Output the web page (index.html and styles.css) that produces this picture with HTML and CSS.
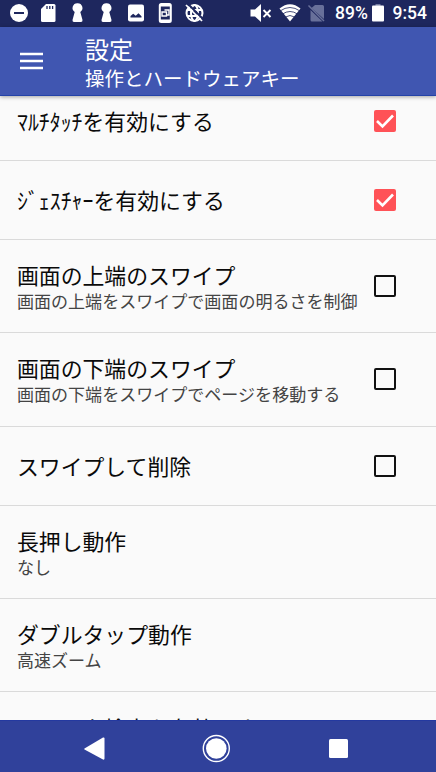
FILE: index.html
```html
<!DOCTYPE html>
<html lang="ja">
<head>
<meta charset="utf-8">
<title>設定</title>
<link rel="stylesheet" href="styles.css">
</head>
<body>
<div class="screen">
  <header class="status">
    <svg class="status-icons" width="212" height="27" viewBox="0 0 212 27" fill="#fff">
      <circle cx="19" cy="13" r="9"/><path d="M14 12h10v2H14z" fill="#1e275e"/>
      <path d="M46 4h8q1.500 0 1.500 1.500v15q0 1.500-1.500 1.500H42.500q-1.500 0-1.500-1.500V9z"/>
      <path d="M47 6v3M49.800 6v3M52.600 6v3" stroke="#1e275e" stroke-width="1.300"/>
      <path id="keyhole" d="M77.500 3.200a4.800 4.800 0 0 1 2.800 8.800l2.200 8q.2 2-1.500 2h-7q-1.700 0-1.500-2l2.200-8a4.800 4.800 0 0 1 2.800-8.800z"/>
      <use href="#keyhole" x="29"/>
      <rect x="128" y="4.500" width="16" height="17" rx="2"/><path d="M130.500 17.500v-1.500l2.700-2.200 2.500 2 2.800-2.500 3 3v1.200z" fill="#1e275e"/>
      <rect x="159.800" y="4" width="11" height="18" rx="1.500" fill="none" stroke="#fff" stroke-width="2"/>
      <path d="M160 5.500h11M160 20.500h11" stroke="#fff" stroke-width="2"/>
      <path d="M162 12h4.500v4H162zM164.500 10h4.500v5h-2" fill="none" stroke="#fff" stroke-width="1.400"/>
      <g fill="none" stroke="#fff" stroke-width="2"><circle cx="194.500" cy="13" r="8"/><ellipse cx="194.500" cy="13" rx="3.500" ry="8"/><path d="M187 10h15M187 16h15"/></g>
      <path d="M187.500 3.500l16 16" stroke="#1e275e" stroke-width="2"/><path d="M186 5l16 16" stroke="#fff" stroke-width="1.700"/>
    </svg>
    <div class="status-right">
      <svg width="82" height="27" viewBox="248 0 82 27" fill="#fff">
        <path d="M250.500 9.500h4.500l6-5.500v18l-6-5.500h-4.500z"/><path d="M263.500 10l7 7M270.500 10l-7 7" stroke="#fff" stroke-width="1.900"/>
        <path d="M279.500 8.500Q290 0 300.500 8.500L290 21.500z"/>
        <path d="M280 11q10-7 20 0M282.500 14q7.500-5 15 0M285.500 17q4.500-3 9 0" fill="none" stroke="#1e275e" stroke-width=".8"/>
        <path d="M315 5h7.500q1.500 0 1.500 1.500V19l-12.500-11zM310.500 10v10q0 1.500 1.500 1.500h10.500z" fill="#68709a"/><path d="M308.500 5.500l15.500 15.500" stroke="#68709a" stroke-width="1.500"/>
      </svg>
      <span class="percent">89%</span>
      <svg class="battery" width="12" height="27" viewBox="0 0 12 27"><path d="M3.500 4h5v2h-5z" fill="#737a9f"/><rect y="5.500" width="12" height="16" rx="1" fill="#fff"/></svg>
      <span class="clock">9:54</span>
    </div>
  </header>
  <div class="appbar">
    <svg class="menu" width="24" height="18" viewBox="0 0 24 18"><path d="M0 2h23M0 9h23M0 16h23" stroke="#fff" stroke-width="2.300"/></svg>
    <div><h1>設定</h1><p>操作とハードウェアキー</p></div>
  </div>
  <main class="list">
    <div class="row first"><div class="text"><div class="title">ﾏﾙﾁﾀｯﾁを有効にする</div></div><span class="box on"><svg viewBox="0 0 22 22"><path d="M3 11l5.500 5.500L19 5.500"/></svg></span></div>
    <div class="row short"><div class="text"><div class="title">ｼﾞｪｽﾁｬｰを有効にする</div></div><span class="box on"><svg viewBox="0 0 22 22"><path d="M3 11l5.500 5.500L19 5.500"/></svg></span></div>
    <div class="row"><div class="text"><div class="title">画面の上端のスワイプ</div><div class="sub">画面の上端をスワイプで画面の明るさを制御</div></div><span class="box"></span></div>
    <div class="row"><div class="text"><div class="title">画面の下端のスワイプ</div><div class="sub">画面の下端をスワイプでページを移動する</div></div><span class="box"></span></div>
    <div class="row short"><div class="text"><div class="title">スワイプして削除</div></div><span class="box"></span></div>
    <div class="row"><div class="text"><div class="title">長押し動作</div><div class="sub">なし</div></div></div>
    <div class="row"><div class="text"><div class="title">ダブルタップ動作</div><div class="sub">高速ズーム</div></div></div>
    <div class="row last"><div class="text"><div class="title">シェイク検索を有効にする</div></div></div>
  </main>
  <nav class="nav">
    <svg width="436" height="52" viewBox="0 0 436 52" fill="#fff">
      <path d="M84.500 28.500L103 17.500q1.500-.5 1.500 1v20q0 1.500-1.500 1L84.500 29.500q-.7-.5 0-1z"/>
      <circle cx="216.300" cy="28.500" r="10.300"/><circle cx="216.300" cy="28.500" r="13" fill="none" stroke="#fff" stroke-width="1.400"/>
      <rect x="329" y="19" width="19" height="19" rx="1.500"/>
    </svg>
  </nav>
</div>
</body>
</html>
```
FILE: styles.css
```css
* { box-sizing: border-box; }
body { margin: 0; font-family: "Noto Sans CJK JP", sans-serif; background: #fafafa; }
.screen { width: 436px; height: 772px; display: flex; flex-direction: column; overflow: hidden; }
.status { height: 27px; flex: none; background: #1e275e; color: #fff; display: flex; justify-content: space-between; }
.status svg { display: block; flex: none; }
.status-right { display: flex; width: 188px; font: 500 17.500px/27px Roboto, sans-serif; }
.percent { margin-left: 5px; width: 37px; }
.clock { margin-left: 8.500px; white-space: nowrap; }
.appbar { height: 69px; flex: none; background: #4056b1; color: #fff; display: flex; z-index: 1; border-bottom: 1px solid #2443a8; box-shadow: 0 1px 4px rgba(0,0,0,.35); }
.menu { margin: 25px 42px 0 20px; flex: none; }
h1 { margin: 6px 0 0 -1px; font-size: 24px; line-height: 32px; font-weight: 400; }
p { margin: 0 0 0 -1px; font-size: 19.500px; line-height: 26px; white-space: nowrap; }
.list { flex: 1; min-height: 0; overflow: hidden; }
.row { height: 93.300px; padding: 19px 40px 0 17px; display: flex; justify-content: space-between; border-bottom: 1px solid #dadada; }
.row .box { margin-top: 16px; }
.row.short { height: 79px; padding-top: 0; align-items: center; }
.row.first { height: 65px; padding-top: 9px; }
.row.short .box { margin-top: 0; }
.row.first .box { margin-top: 5px; }
.row.last { padding-top: 20px; }
.title { font-size: 21.850px; line-height: 32px; color: #0a0a0a; white-space: nowrap; }
.sub { font-size: 17.050px; line-height: 20px; color: #444; white-space: nowrap; }
.box { width: 22px; height: 22px; border: 2px solid #111; border-radius: 2px; flex: none; }
.box.on { border: 0; background: #ff5257; }
.box svg { display: block; fill: none; stroke: #fff; stroke-width: 2.600; }
.nav { height: 52px; flex: none; background: #30419b; border-top: 1px solid #2439a0; }
.nav svg { display: block; margin-top: -1px; }
```
